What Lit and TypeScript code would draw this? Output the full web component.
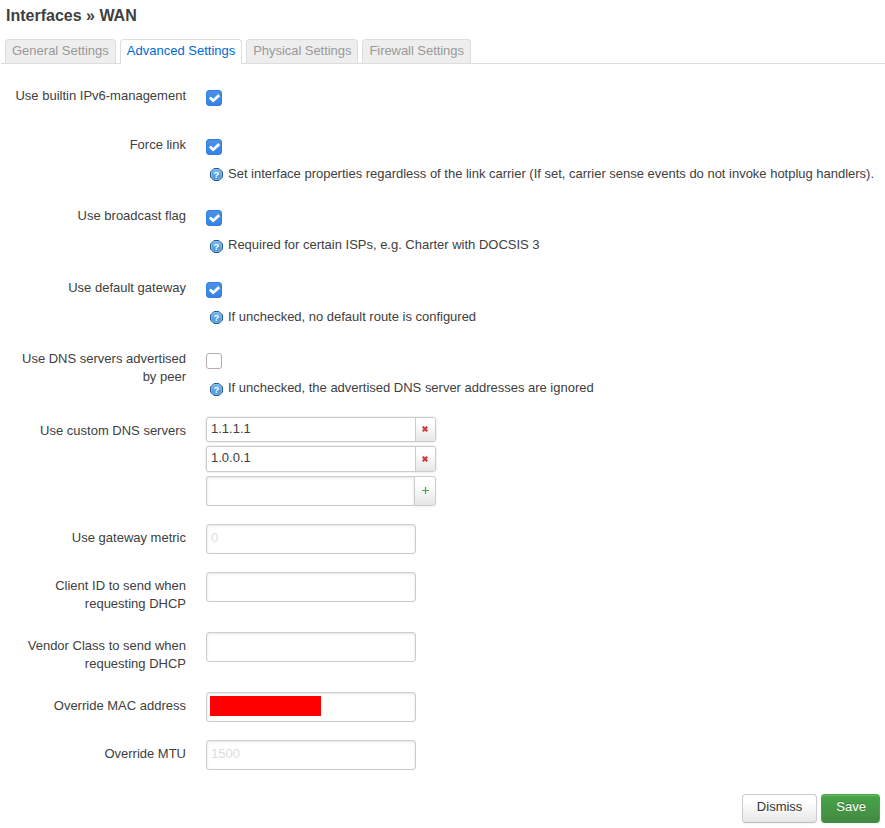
import { LitElement, html, css, svg, nothing } from "lit";
import { customElement, property } from "lit/decorators.js";
import { classMap } from "lit/directives/class-map.js";

@customElement("check-box")
class CheckBox extends LitElement {
  @property({ type: Boolean }) checked = false;

  static styles = css`
    :host {
      display: block;
      width: 16px;
      height: 16px;
    }
    .box {
      box-sizing: border-box;
      display: block;
      width: 16px;
      height: 16px;
      border: 1px solid #b6aca4;
      border-radius: 3px;
      background: #fff;
    }
    .checked {
      border-color: #2f7de1;
      background: linear-gradient(#4a91e9, #3583e4);
    }
    svg {
      display: block;
      width: 14px;
      height: 14px;
    }
  `;

  render() {
    return html`<span class=${classMap({ box: true, checked: this.checked })}>
      ${this.checked
        ? html`<svg viewBox="0 0 14 14">
            <path d="M2.9 6.6 L6.1 9.7 L12.2 4.1" fill="none" stroke="#fff" stroke-width="2.8" />
          </svg>`
        : nothing}
    </span>`;
  }
}

@customElement("help-hint")
class HelpHint extends LitElement {
  static styles = css`
    :host {
      display: flex;
      align-items: flex-start;
      gap: 5px;
      padding-left: 4px;
      line-height: 18px;
      letter-spacing: -0.012px;
      white-space: nowrap;
    }
    svg {
      flex: none;
      width: 13px;
      height: 13px;
      margin-top: 3.35px;
    }
    .mark {
      font: bold 9.5px "Liberation Sans", Arial, sans-serif;
      fill: #fff;
      text-anchor: middle;
    }
  `;

  render() {
    return html`<svg viewBox="0 0 13 13">
        <defs>
          <linearGradient id="g" x1="0" y1="0" x2="0" y2="1">
            <stop offset="0" stop-color="#7dbcf0" />
            <stop offset="1" stop-color="#3a8fdc" />
          </linearGradient>
        </defs>
        ${svg`<path d="M4 .5H9L12.5 4V9L9 12.5H4L.5 9V4Z" fill="url(#g)" stroke="#2c5a88" />
        <path d="M4.4 1.5H8.6L11.5 4.4V8.6L8.6 11.5H4.4L1.5 8.6V4.4Z" fill="none" stroke="#86c0ee" stroke-width=".8" />`}
        <text class="mark" x="6.5" y="10">?</text>
      </svg>
      <span><slot></slot></span>`;
  }
}

@customElement("app-root")
class AppRoot extends LitElement {
  static styles = css`
    :host {
      display: block;
      box-sizing: border-box;
      width: 100%;
      height: 828px;
      overflow: hidden;
      background: #fff;
      color: #404040;
      font: 13px/18px "Liberation Sans", Helvetica, Arial, sans-serif;
    }
    h4 {
      margin: 0 0 0 6px;
      height: 39px;
      font-size: 16px;
      line-height: 31px;
    }
    .tabs {
      display: flex;
      gap: 4px;
      height: 24px;
      margin-left: 1px;
      padding-left: 4px;
      border-bottom: 1px solid #ddd;
    }
    .tab {
      box-sizing: border-box;
      height: 24px;
      padding: 0 6px;
      border: 1px solid #ddd;
      border-bottom: 0;
      border-radius: 4px 4px 0 0;
      background: #eee;
      color: #999;
      line-height: 22px;
      white-space: nowrap;
    }
    .tab:nth-child(n + 3) {
      letter-spacing: -0.05px;
    }
    .tab.active {
      height: 25px;
      background: #fff;
      color: #0069d6;
    }
    .form {
      display: flex;
      flex-direction: column;
      gap: 18px;
      padding-top: 18px;
    }
    .row {
      display: flex;
      gap: 20px;
    }
    .label {
      flex: none;
      box-sizing: border-box;
      width: 186px;
      padding: 5px 0 1px;
      text-align: right;
      white-space: nowrap;
    }
    .check {
      height: 31px;
      padding-top: 8px;
      box-sizing: border-box;
    }
    .hinted {
      height: 53.4px;
    }
    .hinted help-hint {
      margin-top: 10px;
    }
    .input {
      box-sizing: border-box;
      width: 210px;
      height: 30px;
      padding: 0 4px;
      border: 1px solid #ccc;
      border-radius: 3px;
      box-shadow: inset 0 1px 3px rgba(0, 0, 0, 0.1);
      line-height: 26px;
    }
    .placeholder {
      color: #ddd;
    }
    .redacted {
      width: 111px;
      height: 20px;
      margin: 3px 0 0 -1px;
      background: #f00;
    }
    .list {
      display: flex;
      flex-direction: column;
      width: 230px;
    }
    .item {
      display: flex;
      box-sizing: border-box;
      height: 25.6px;
      margin-bottom: 4px;
      border: 1px solid #ccc;
      border-radius: 3px;
      box-shadow: 0 0 2px rgba(0, 0, 0, 0.2);
      line-height: 22px;
      overflow: hidden;
    }
    .value {
      flex: 1;
      padding-left: 4px;
    }
    .side {
      box-sizing: border-box;
      width: 20px;
      padding-right: 1px;
      border-left: 1px solid #ccc;
      background: linear-gradient(#fff, #fff 25%, #e6e6e6);
      display: flex;
      align-items: center;
      justify-content: center;
    }
    .side svg {
      display: block;
    }
    .add {
      display: flex;
      height: 30px;
    }
    .add .input {
      width: 208px;
      border-right: 0;
      border-radius: 3px 0 0 3px;
    }
    .add .side {
      flex: 1;
      padding: 0 0 1px;
      border: 1px solid #ccc;
      border-radius: 0 3px 3px 0;
      box-shadow: 0 1px 2px rgba(0, 0, 0, 0.05);
    }
    .actions {
      display: flex;
      justify-content: flex-end;
      gap: 4px;
      margin-top: 24px;
      padding-right: 5px;
    }
    .btn {
      box-sizing: border-box;
      height: 29px;
      padding: 0 14px 3px;
      border: 1px solid #ccc;
      border-bottom-color: #bbb;
      border-radius: 4px;
      background: linear-gradient(#fff, #fff 25%, #e6e6e6);
      color: #333;
      font: inherit;
      line-height: 24px;
      text-shadow: 0 1px 1px rgba(255, 255, 255, 0.75);
      box-shadow: inset 0 1px 0 rgba(255, 255, 255, 0.2), 0 1px 2px rgba(0, 0, 0, 0.05);
    }
    .save {
      padding-right: 13px;
      border-color: #46a546 #46a546 #3d8b3d;
      background: linear-gradient(#46a546, #448944);
      color: #fff;
      text-shadow: 0 -1px 0 rgba(0, 0, 0, 0.25);
    }
  `;

  private tabs = ["General Settings", "Advanced Settings", "Physical Settings", "Firewall Settings"];

  private row(label: unknown, content: unknown) {
    return html`<div class="row"><div class="label">${label}</div>${content}</div>`;
  }

  private check(label: unknown, checked: boolean, hint = "") {
    return this.row(
      label,
      html`<div class=${classMap({ check: true, hinted: hint !== "" })}>
        <check-box ?checked=${checked}></check-box>
        ${hint ? html`<help-hint>${hint}</help-hint>` : nothing}
      </div>`
    );
  }

  private input(label: unknown, placeholder = "") {
    return this.row(label, html`<div class="input placeholder">${placeholder}</div>`);
  }

  private server(address: string) {
    return html`<div class="item">
      <span class="value">${address}</span>
      <span class="side">
        <svg width="6" height="6" viewBox="0 0 6 6">
          <path d="M.7 .7L5.3 5.3M5.3 .7L.7 5.3" stroke="#d03a3a" stroke-width="2.1" />
        </svg>
      </span>
    </div>`;
  }

  render() {
    return html`
      <h4>Interfaces » WAN</h4>
      <div class="tabs">
        ${this.tabs.map(
          (t, i) => html`<div class=${classMap({ tab: true, active: i === 1 })}>${t}</div>`
        )}
      </div>
      <div class="form">
        ${this.check("Use builtin IPv6-management", true)}
        ${this.check(
          "Force link",
          true,
          "Set interface properties regardless of the link carrier (If set, carrier sense events do not invoke hotplug handlers)."
        )}
        ${this.check("Use broadcast flag", true, "Required for certain ISPs, e.g. Charter with DOCSIS 3")}
        ${this.check("Use default gateway", true, "If unchecked, no default route is configured")}
        ${this.check(
          html`Use DNS servers advertised<br />by peer`,
          false,
          "If unchecked, the advertised DNS server addresses are ignored"
        )}
        ${this.row(
          "Use custom DNS servers",
          html`<div class="list">
            ${this.server("1.1.1.1")} ${this.server("1.0.0.1")}
            <div class="add">
              <div class="input"></div>
              <div class="side">
                <svg width="7" height="7" viewBox="0 0 7 7">
                  <path d="M3.5 0V7M0 3.5H7" stroke="#3db03d" stroke-width="1.2" />
                </svg>
              </div>
            </div>
          </div>`
        )}
        ${this.input("Use gateway metric", "0")}
        ${this.input(html`Client ID to send when<br />requesting DHCP`)}
        ${this.input(html`Vendor Class to send when<br />requesting DHCP`)}
        ${this.row("Override MAC address", html`<div class="input"><div class="redacted"></div></div>`)}
        ${this.input("Override MTU", "1500")}
      </div>
      <div class="actions">
        <button class="btn">Dismiss</button>
        <button class="btn save">Save</button>
      </div>
    `;
  }
}
